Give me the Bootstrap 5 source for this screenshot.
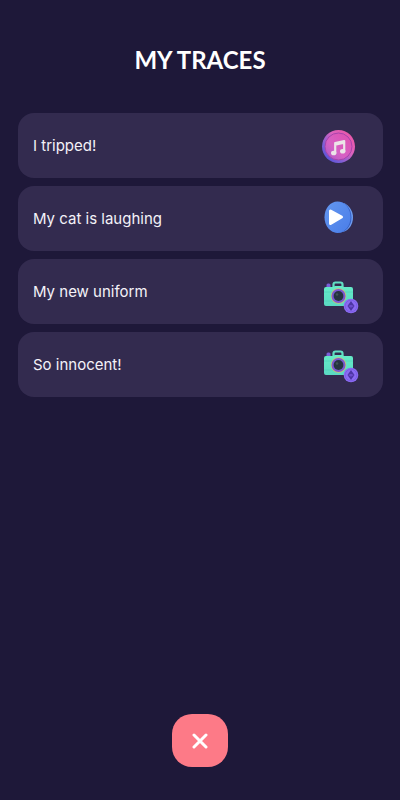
<!DOCTYPE html>
<html lang="en">
<head>
<meta charset="utf-8">
<meta name="viewport" content="width=device-width, initial-scale=1">
<title>My Traces</title>
<link href="https://cdn.jsdelivr.net/npm/bootstrap@5.3.0/dist/css/bootstrap.min.css" rel="stylesheet">
<style>
body { background: #1e1839; color: #fff; font-family: Inter, "Liberation Sans", sans-serif; }
.page-title { font: bold 24px/40px Lato, sans-serif; }
.page-head { padding: 40px 0 33px; }
.trace-list { padding: 0 17px 0 18px; }
.trace { min-height: 65px; padding: 0 23px 0 15px; background: #332b4f; border-radius: 16px; color: #f4f2f8; font-size: 15px; line-height: 20px; }
.trace:hover { color: #fff; }
.trace svg { overflow: visible; }
.page-foot { padding-bottom: 33px; }
.close-btn { width: 56px; height: 53px; border: 0; border-radius: 20px; background: #fd7a87; }
</style>
</head>
<body>
<svg width="0" height="0" class="position-absolute" aria-hidden="true">
  <defs>
    <linearGradient id="rim" x1="0" y1="1" x2="1" y2="0"><stop offset="0" stop-color="#4a48d8"/><stop offset=".3" stop-color="#7a5fd6"/><stop offset=".6" stop-color="#dc62bd"/><stop offset="1" stop-color="#f0529f"/></linearGradient>
    <linearGradient id="disc" x1="0" y1="1" x2="1" y2="0"><stop offset="0" stop-color="#a857cb"/><stop offset=".4" stop-color="#d661c4"/><stop offset="1" stop-color="#e34fae"/></linearGradient>
    <linearGradient id="face" x1="0" y1="0" x2="1" y2="1"><stop offset="0" stop-color="#6397f0"/><stop offset="1" stop-color="#4a7de8"/></linearGradient>
    <linearGradient id="body" x1="0" y1="0" x2="0" y2="1"><stop offset="0" stop-color="#66ecc8"/><stop offset="1" stop-color="#5ad9c2"/></linearGradient>
    <g id="camera">
      <rect x="6.500" y="1.500" width="4" height="6" rx="1.500" fill="#7a5fd8"/>
      <path d="M13.500 6V2.500q0-2 2-2h5q2 0 2 2V6" fill="none" stroke="#61dfc3" stroke-width="2.200"/>
      <path d="M6 5h7l2-1h7l2 1h7q2 0 2 2v15q0 2-2 2H6q-2 0-2-2V7q0-2 2-2z" fill="url(#body)"/>
      <path d="M4 10h29M4 19h29" stroke="#4bc7b3" stroke-width=".5"/>
      <circle cx="18.500" cy="14" r="7.700" fill="#d2bd72"/>
      <circle cx="18.500" cy="14" r="7" fill="#7957d0"/>
      <circle cx="18.500" cy="14" r="4.900" fill="#263440"/>
      <circle cx="17" cy="12.500" r="1.300" fill="#3f5554"/>
      <circle cx="31" cy="24" r="7.300" fill="#8b6bf2"/>
      <circle cx="31" cy="24" r="5.800" fill="none" stroke="#7657df" stroke-width=".7"/>
      <path d="M31 19l3.500 5-3.500 5-3.500-5z" fill="#4d35a3"/>
      <path d="M28 24l3-1.300 3 1.300-3 1.700z" fill="#6c4dcc"/>
    </g>
  </defs>
</svg>
<div class="min-vh-100 d-flex flex-column">
  <header class="page-head text-center">
    <h1 class="page-title m-0">MY TRACES</h1>
  </header>
  <main class="trace-list d-flex flex-column gap-2 flex-grow-1">
    <a href="#" class="trace d-flex align-items-center justify-content-between text-decoration-none">
      <span>I tripped!</span>
      <svg width="40" height="40" viewBox="0 0 40 40" role="img" aria-label="Music">
        <circle cx="18.500" cy="20.500" r="16.500" fill="url(#rim)"/>
        <circle cx="18.500" cy="20.500" r="13.500" fill="url(#disc)" stroke="#a843ad" stroke-width="1"/>
        <path d="M15.200 27.500V17l9-2v10.500M15.200 18.800l9-2" fill="none" stroke="#ece5e8" stroke-width="2.200" stroke-linejoin="round"/>
        <ellipse cx="13.700" cy="27" rx="2.700" ry="2.300" fill="#ece5e8"/>
        <ellipse cx="22.700" cy="25.300" rx="2.700" ry="2.300" fill="#ece5e8"/>
      </svg>
    </a>
    <a href="#" class="trace d-flex align-items-center justify-content-between text-decoration-none">
      <span>My cat is laughing</span>
      <svg width="40" height="40" viewBox="0 0 40 40" role="img" aria-label="Video">
        <ellipse cx="20" cy="18.500" rx="13" ry="15" fill="#6f9df1"/>
        <ellipse cx="18.500" cy="18.400" rx="13" ry="15.300" fill="#3560c4"/>
        <ellipse cx="17.500" cy="18.200" rx="13" ry="15.700" fill="url(#face)"/>
        <path d="M10.500 12v12.500L21.500 18z" fill="#fff" stroke="#fff" stroke-width="3" stroke-linejoin="round"/>
      </svg>
    </a>
    <a href="#" class="trace d-flex align-items-center justify-content-between text-decoration-none">
      <span>My new uniform</span>
      <svg width="40" height="40" viewBox="0 0 40 40" role="img" aria-label="Photo"><use href="#camera" y="10"/></svg>
    </a>
    <a href="#" class="trace d-flex align-items-center justify-content-between text-decoration-none">
      <span>So innocent!</span>
      <svg width="40" height="40" viewBox="0 0 40 40" role="img" aria-label="Photo"><use href="#camera" y="6"/></svg>
    </a>
  </main>
  <footer class="page-foot d-flex justify-content-center">
    <button type="button" class="close-btn d-flex align-items-center justify-content-center p-0" aria-label="Close">
      <svg width="16" height="16" viewBox="0 0 16 16" aria-hidden="true"><path d="M2 2l12 12M14 2L2 14" stroke="#fff" stroke-width="3" stroke-linecap="round"/></svg>
    </button>
  </footer>
</div>
<script src="https://cdn.jsdelivr.net/npm/bootstrap@5.3.0/dist/js/bootstrap.bundle.min.js"></script>
</body>
</html>
